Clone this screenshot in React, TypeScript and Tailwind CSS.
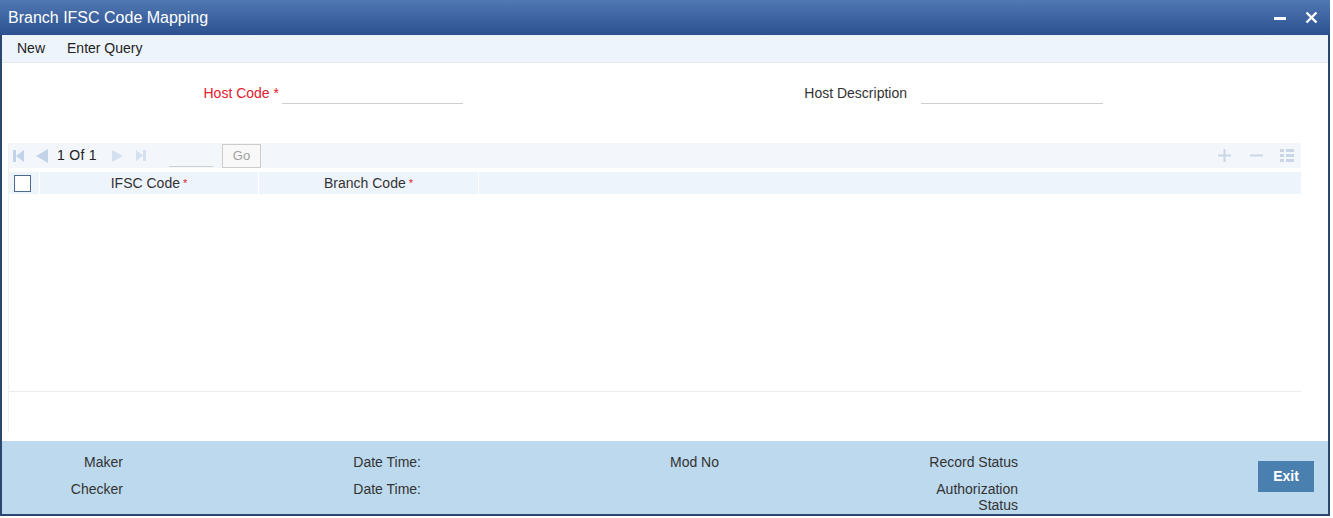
import type { ReactNode } from 'react'

const font = { fontFamily: '"Liberation Sans", Arial, sans-serif' }

function FirstIcon() {
  return (
    <svg width="11" height="12" viewBox="0 0 11 12">
      <rect x="0" y="0" width="3" height="12" fill="#c2d3e8" />
      <path d="M11 0 L3 6 L11 12 Z" fill="#c2d3e8" />
    </svg>
  )
}

function PrevIcon() {
  return (
    <svg width="12" height="14" viewBox="0 0 12 14">
      <path d="M12 0 L0 7 L12 14 Z" fill="#c2d3e8" />
    </svg>
  )
}

function NextIcon() {
  return (
    <svg width="11" height="12" viewBox="0 0 11 12">
      <path d="M0 0 L11 6 L0 12 Z" fill="#d3e0ef" />
    </svg>
  )
}

function LastIcon() {
  return (
    <svg width="10" height="11" viewBox="0 0 10 11">
      <path d="M0 0 L7 5.5 L0 11 Z" fill="#d3e0ef" />
      <rect x="7" y="0" width="3" height="11" fill="#d3e0ef" />
    </svg>
  )
}

function PlusIcon() {
  return (
    <svg width="13" height="13" viewBox="0 0 13 13">
      <rect x="5.5" y="0" width="2" height="13" fill="#c9d6e6" />
      <rect x="0" y="5.5" width="13" height="2" fill="#c9d6e6" />
    </svg>
  )
}

function MinusIcon() {
  return (
    <svg width="13" height="13" viewBox="0 0 13 13">
      <rect x="0" y="5.5" width="13" height="2" fill="#c9d6e6" />
    </svg>
  )
}

function ListIcon() {
  return (
    <svg width="14" height="13" viewBox="0 0 14 13">
      <rect x="0" y="0" width="4" height="3" fill="#c9d6e6" />
      <rect x="6" y="0" width="8" height="3" fill="#c9d6e6" />
      <rect x="0" y="5" width="4" height="3" fill="#c9d6e6" />
      <rect x="6" y="5" width="8" height="3" fill="#c9d6e6" />
      <rect x="0" y="10" width="4" height="3" fill="#c9d6e6" />
      <rect x="6" y="10" width="8" height="3" fill="#c9d6e6" />
    </svg>
  )
}

function HeaderCell({ width, children }: { width: string; children: ReactNode }) {
  return (
    <div className={`${width} h-full flex items-center justify-center border-r border-white text-[14px] text-[#333]`}>
      {children}
    </div>
  )
}

export default function App() {
  return (
    <div className="w-[1333px] h-[518px] bg-white overflow-hidden" style={font}>
      <div className="w-[1330px] h-[516px] flex flex-col border-x-2 border-b-2 border-[#2b4770]">
        {/* title bar */}
        <div className="h-[35px] -mx-[2px] flex items-center justify-between pl-[8px] pr-[12px] bg-gradient-to-b from-[#5078b2] to-[#2c5190] text-white">
          <span className="text-[16px]">Branch IFSC Code Mapping</span>
          <div className="flex items-center gap-[19px]">
            <span className="w-[12px] h-[3px] bg-white mt-[2px]" />
            <svg width="13" height="13" viewBox="0 0 13 13">
              <path d="M1.5 1.5 L11.5 11.5 M11.5 1.5 L1.5 11.5" stroke="#fff" strokeWidth="2.4" />
            </svg>
          </div>
        </div>

        {/* toolbar */}
        <div className="h-[28px] flex items-center gap-[22px] pl-[15px] bg-[#eef4fc] border-b border-[#e3e9f0] text-[14px] text-[#222]">
          <span>New</span>
          <span>Enter Query</span>
        </div>

        {/* form */}
        <div className="mt-[15px] h-[30px] flex items-center">
          <div className="w-[277px] text-right text-[14px] text-[#e0202c]">
            Host Code <span className="text-[#e0202c]">*</span>
          </div>
          <div className="ml-[3px] w-[181px] h-[22px] border-b border-[#cfcfcf]" />
          <div className="w-[444px] text-right text-[14px] text-[#333]">Host Description</div>
          <div className="ml-[14px] w-[182px] h-[22px] border-b border-[#cfcfcf]" />
        </div>

        {/* grid */}
        <div className="mt-[35px] ml-[6px] w-[1293px] h-[289px] border-l border-[#f0f0f0] flex flex-col">
          <div className="h-[25px] flex items-center justify-between bg-[#f3f7fc]">
            <div className="flex items-center h-full">
              <div className="ml-[4px]">
                <FirstIcon />
              </div>
              <div className="ml-[12px]">
                <PrevIcon />
              </div>
              <span className="ml-[9px] text-[14px] text-[#222] tracking-[0.3px]">1 Of 1</span>
              <div className="ml-[15px]">
                <NextIcon />
              </div>
              <div className="ml-[13px]">
                <LastIcon />
              </div>
              <div className="ml-[23px] w-[44px] h-[23px] border-b border-[#d0d0d0]" />
              <div className="ml-[9px] w-[39px] h-[24px] border border-[#cccccc] bg-[#f8f8f8] flex items-center justify-center text-[13px] text-[#a0a0a0]">
                Go
              </div>
            </div>
            <div className="flex items-center pr-[7px]">
              <PlusIcon />
              <div className="ml-[19px]">
                <MinusIcon />
              </div>
              <div className="ml-[17px]">
                <ListIcon />
              </div>
            </div>
          </div>
          <div className="mt-[4px] h-[22px] flex bg-[#eef4fc]">
            <div className="w-[31px] h-full flex items-center pl-[5px] border-r border-white">
              <div className="w-[17px] h-[17px] border border-[#4b6b90] bg-white" />
            </div>
            <HeaderCell width="w-[219px]">
              IFSC Code<span className="ml-[3px] text-[11px] text-[#e0202c]">*</span>
            </HeaderCell>
            <HeaderCell width="w-[220px]">
              Branch Code<span className="ml-[3px] text-[11px] text-[#e0202c]">*</span>
            </HeaderCell>
          </div>
          <div className="h-[198px] border-b border-[#ececec] bg-white" />
        </div>

        {/* footer */}
        <div className="mt-[9px] flex-1 bg-[#bdd9ed] flex text-[14px] text-[#333]">
          <div className="pt-[13px] grid grid-cols-[121px_298px_298px_299px] gap-y-[10px] leading-[16px]">
            <div className="text-right">Maker</div>
            <div className="text-right">Date Time:</div>
            <div className="text-right">Mod No</div>
            <div className="text-right">Record Status</div>
            <div className="text-right">Checker</div>
            <div className="text-right">Date Time:</div>
            <div />
            <div className="text-right">
              Authorization
              <br />
              Status
            </div>
          </div>
          <div className="flex-1 flex justify-end pr-[14px] pt-[20px]">
            <div className="w-[56px] h-[31px] bg-[#4a80b0] text-white font-bold text-[14px] flex items-center justify-center">
              Exit
            </div>
          </div>
        </div>
      </div>
    </div>
  )
}
